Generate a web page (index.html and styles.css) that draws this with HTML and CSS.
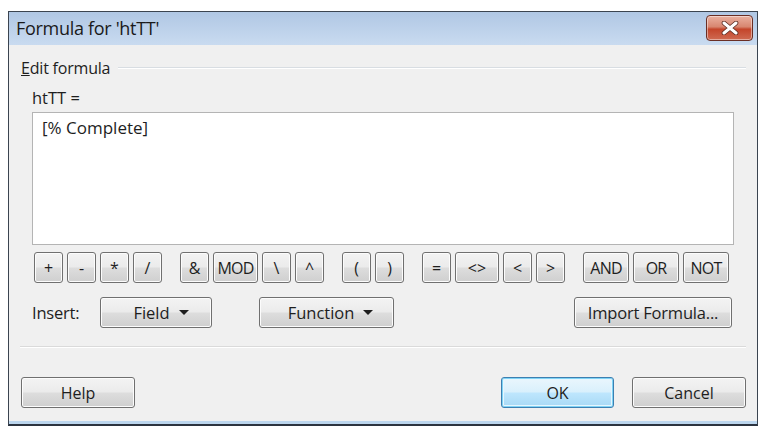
FILE: index.html
```html
<!DOCTYPE html>
<html lang="en">
<head>
<meta charset="utf-8">
<title>Formula for 'htTT'</title>
<link rel="stylesheet" href="styles.css">
</head>
<body>
<div class="window">
  <div class="titlebar">
    <span class="title">Formula for 'htTT'</span>
    <button class="close" aria-label="Close">
      <svg width="20" height="14" viewBox="0 0 20 14">
        <path d="M4 2 L16 12 M16 2 L4 12" stroke="#5a2a20" stroke-width="4.6" stroke-linecap="round"/>
        <path d="M4 2 L16 12 M16 2 L4 12" stroke="#ffffff" stroke-width="3" stroke-linecap="round"/>
      </svg>
    </button>
  </div>
  <div class="content">
    <div class="group-head">
      <span class="group-label"><u>E</u>dit formula</span>
      <span class="group-line"></span>
    </div>
    <div class="group-body">
      <div class="field-name">htTT =</div>
      <div class="editor">[% Complete]</div>
      <div class="ops">
        <div class="op-group">
          <button class="btn op">+</button>
          <button class="btn op">-</button>
          <button class="btn op">*</button>
          <button class="btn op">/</button>
        </div>
        <div class="op-group">
          <button class="btn op">&amp;</button>
          <button class="btn op wide">MOD</button>
          <button class="btn op">\</button>
          <button class="btn op">^</button>
        </div>
        <div class="op-group">
          <button class="btn op">(</button>
          <button class="btn op">)</button>
        </div>
        <div class="op-group">
          <button class="btn op">=</button>
          <button class="btn op ne">&lt;&gt;</button>
          <button class="btn op">&lt;</button>
          <button class="btn op">&gt;</button>
        </div>
        <div class="op-group">
          <button class="btn op logic">AND</button>
          <button class="btn op logic">OR</button>
          <button class="btn op logic">NOT</button>
        </div>
      </div>
      <div class="insert-row">
        <span class="insert-label">Insert:</span>
        <button class="btn drop field">Field <span class="caret"></span></button>
        <button class="btn drop function">Function <span class="caret"></span></button>
        <button class="btn import">Import Formula...</button>
      </div>
    </div>
    <div class="separator"></div>
    <div class="footer">
      <button class="btn foot">Help</button>
      <div class="footer-right">
        <button class="btn foot default">OK</button>
        <button class="btn foot">Cancel</button>
      </div>
    </div>
  </div>
</div>
</body>
</html>
```
FILE: styles.css
```css
* { box-sizing: border-box; }

body {
  margin: 0;
  background: #ffffff;
  font-family: "Open Sans", "Noto Sans", sans-serif;
  color: #1e1e1e;
}

.window {
  margin: 11px 0 0 8px;
  width: 750px;
  height: 415px;
  border: 1px solid #3b4450;
  border-bottom: 2px solid #2c3440;
  background: #f0f0f0;
  display: flex;
  flex-direction: column;
  box-shadow: inset 0 -3px 0 #bcd6ee;
}

.titlebar {
  height: 33px;
  flex: none;
  display: flex;
  align-items: flex-start;
  justify-content: space-between;
  padding-left: 7px;
  background: linear-gradient(#b0c7e4, #c9dbf0);
}

.title {
  font-size: 18px;
  line-height: 33px;
  color: #1a1a1a;
  letter-spacing: -0.3px;
}

.close {
  margin: 3px 4px 0 0;
  width: 47px;
  height: 26px;
  border: 1px solid #6a2e24;
  border-radius: 4px;
  padding: 0;
  display: flex;
  align-items: center;
  justify-content: center;
  background: linear-gradient(#eab0a0 0%, #d88670 45%, #c4452b 55%, #cf6b52 100%);
  box-shadow: inset 0 0 0 1px rgba(255, 255, 255, 0.45);
}

.content {
  flex: 1;
  display: flex;
  flex-direction: column;
  padding: 0 11px 0 12px;
  font-size: 16px;
}

.group-head {
  margin-top: 13px;
  height: 20px;
  display: flex;
  align-items: center;
}

.group-label {
  line-height: 20px;
  letter-spacing: -0.2px;
}

.group-line {
  flex: 1;
  margin: 0 0 0 8px;
  border-top: 1px solid #d8dde2;
  border-bottom: 1px solid #ffffff;
}

.group-body {
  padding: 0 12px 0 11px;
}

.field-name {
  margin-top: 10px;
  height: 20px;
  line-height: 20px;
  font-size: 16.5px;
}

.editor {
  margin-top: 4px;
  height: 133px;
  background: #ffffff;
  border: 1px solid #b4b4b4;
  padding: 5px 9px;
  line-height: 20px;
  font-size: 17px;
}

.btn {
  font-family: inherit;
  color: #1e1e1e;
  border: 1px solid #707070;
  border-radius: 3px;
  padding: 0;
  background: linear-gradient(#f3f3f3 0%, #ebebeb 48%, #dddddd 52%, #cfcfcf 100%);
  box-shadow: inset 0 0 0 1px #fcfcfc;
  display: flex;
  align-items: center;
  justify-content: center;
}

.ops {
  margin-top: 7px;
  padding-left: 2px;
  display: flex;
  gap: 18px;
}

.op-group {
  display: flex;
  gap: 4px;
}

.op {
  width: 29px;
  height: 31px;
  font-size: 16px;
}

.op.wide { width: 45px; letter-spacing: -0.8px; }
.op.ne { width: 44px; }
.op.logic { width: 46px; letter-spacing: -0.8px; }

.insert-row {
  margin-top: 14px;
  display: flex;
  align-items: center;
  padding-right: 2px;
}

.insert-label {
  width: 68px;
  font-size: 16.5px;
  letter-spacing: -0.2px;
}

.drop, .import {
  height: 31px;
  font-size: 16.5px;
}

.field { width: 112px; padding-left: 10px; }
.function { width: 135px; margin-left: 47px; padding-left: 8px; }
.import { width: 158px; margin-left: auto; letter-spacing: -0.2px; }

.caret {
  display: inline-block;
  margin-left: 9px;
  width: 0;
  height: 0;
  border-left: 5px solid transparent;
  border-right: 5px solid transparent;
  border-top: 5px solid #1e1e1e;
}

.separator {
  margin: 18px 0 0 -1px;
  border-top: 1px solid #dadada;
  border-bottom: 1px solid #ffffff;
}

.footer {
  margin-top: 29px;
  display: flex;
  justify-content: space-between;
}

.footer-right {
  display: flex;
  gap: 18px;
}

.foot {
  width: 114px;
  height: 31px;
  font-size: 16px;
}

.default {
  width: 113px;
  border-color: #3c7fb1;
  background: linear-gradient(#eaf6fd 0%, #d9f0fc 48%, #bee6fd 52%, #a7d9f5 100%);
  box-shadow: inset 0 0 0 1px #7fd3f5, inset 0 0 0 2px #e6f6fe;
}
```
